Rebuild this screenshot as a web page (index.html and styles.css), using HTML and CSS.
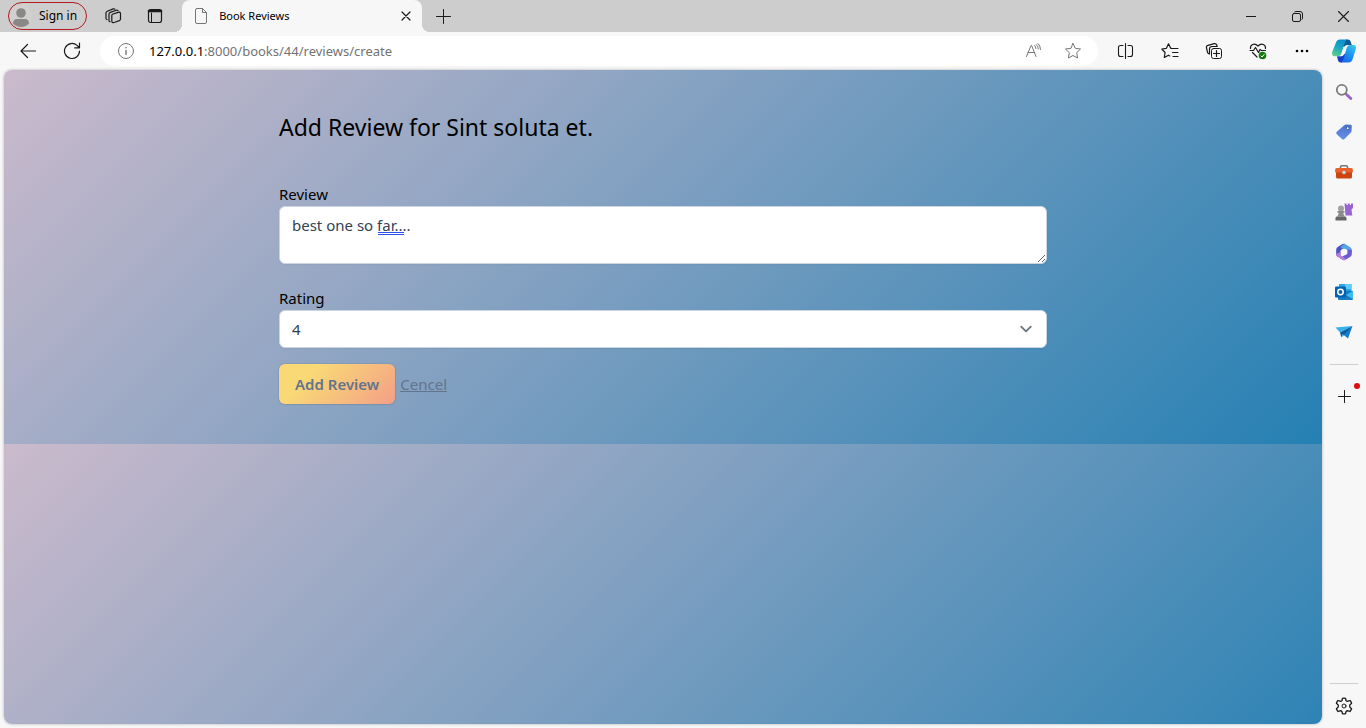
FILE: index.html
```
<!DOCTYPE html>
<html lang="en">
<head>
<meta charset="utf-8">
<title>Book Reviews</title>
<link rel="stylesheet" href="styles.css">
</head>
<body>
<div class="window">
  <header class="tabstrip">
    <button class="profile" type="button">
      <svg width="22" height="22" viewBox="0 0 22 22"><circle cx="11" cy="11" r="11" fill="#d2d0ce"/><circle cx="11" cy="8" r="4.8" fill="#8a8886"/><path d="M3 18.500c0-3 1.500-4.500 4-4.500h8c2.500 0 4 1.500 4 4.500a11 11 0 0 1-16 0z" fill="#8a8886"/></svg>
      <span>Sign in</span>
    </button>
    <button class="strip-button" type="button" aria-label="Workspaces">
      <svg class="line" width="18" height="18" viewBox="0 0 18 18"><path d="M8.500 7.300l5.500-1.900q2.500-.8 2.500 1.500v5q0 1.200-1.200 1.700l-4.500 1.700q-3 1-3-1.300V8.500q0-.9.700-1.200zM5 14V7.300q0-1.300 1.300-1.900l6-2.200q1-.3 1.600.3M5 13.700q.2 1 1 1.100M2 11.700V6Q2 4.700 3.200 4.200l6-2.300q1-.3 1.700.3M2 11.500q.2 1 1 1.200" stroke-width="1.200"/></svg>
    </button>
    <button class="strip-button" type="button" aria-label="Tab actions">
      <svg class="line" width="16" height="16" viewBox="0 0 16 16"><rect x="1.500" y="1.500" width="13" height="13" rx="2.200" stroke-width="1.200"/><path d="M2 3h12" stroke-width="2.600"/><path d="M4.500 5v9.500"/></svg>
    </button>
    <div class="tab">
      <svg class="line muted" width="14" height="18" viewBox="0 0 14 18"><path d="M2.500 1.500h6l4 4v9.500q0 1.500-1.500 1.500H3Q1.500 16.500 1.500 15V3q0-1.500 1.500-1.500M8.500 1.500v4h4"/></svg>
      <span class="tab-title">Book Reviews</span>
      <button type="button" class="tab-close" aria-label="Close tab"><svg class="line" width="10" height="10" viewBox="0 0 10 10"><path d="M1 1l8 8M9 1L1 9" stroke-width="1.200"/></svg></button>
    </div>
    <button class="strip-button" type="button" aria-label="New tab"><svg class="line" width="15" height="15" viewBox="0 0 15 15"><path d="M7.500.5v14M.5 7.500h14"/></svg></button>
    <div class="window-controls">
      <button type="button" aria-label="Minimize"><svg class="line" width="10" height="10" viewBox="0 0 10 10"><path d="M0 5.500h10"/></svg></button>
      <button type="button" aria-label="Restore"><svg class="line" width="11" height="11" viewBox="0 0 11 11"><rect x=".5" y="2.500" width="8" height="8" rx="1.500"/><path d="M2.700.8Q3 .5 4 .5h4q2.500 0 2.500 2.500v4q0 1-.4 1.400"/></svg></button>
      <button type="button" aria-label="Close"><svg class="line" width="11" height="11" viewBox="0 0 11 11"><path d="M.5.5l10 10M10.500.5l-10 10" stroke-width="1.100"/></svg></button>
    </div>
  </header>

  <nav class="toolbar" aria-label="Browser toolbar">
    <button type="button" aria-label="Back"><svg class="line" width="18" height="18" viewBox="0 0 18 18"><path d="M16.500 9H2M8.500 2.500L2 9l6.500 6.500" stroke-width="1.200"/></svg></button>
    <button type="button" aria-label="Refresh"><svg class="line" width="18" height="18" viewBox="0 0 18 18"><path d="M16.500 9a7.500 7.500 0 1 1-2.500-5.600L16.200 5.500M16.500 1v4.800h-4.800" stroke-width="1.200"/></svg></button>
    <div class="address">
      <button type="button" aria-label="Site information"><svg class="line muted" width="18" height="18" viewBox="0 0 18 18"><circle cx="9" cy="9" r="7.500"/><path d="M9 8.500v4M9 5.500v.3" stroke-width="1.400"/></svg></button>
      <div class="url"><span class="host">127.0.0.1</span>:8000/books/44/reviews/create</div>
      <button type="button" aria-label="Read aloud"><svg class="line muted" width="18" height="18" viewBox="0 0 18 18"><path d="M2.500 14.500L7 3.500h.6l4.400 11M4 10.500h6.500M10.500 3.500q1.400 1.200 1.400 3M12.300 2.500q2 1.600 2 4.500M14 1.500q2.500 2 2.500 6"/></svg></button>
      <button type="button" aria-label="Add to favorites"><svg class="line muted" width="18" height="18" viewBox="0 0 18 18"><path d="M9 1.500l2.300 4.800 5.200.7-3.800 3.700.9 5.300L9 13.500 4.400 16l.9-5.300L1.500 7l5.200-.7z"/></svg></button>
    </div>
    <button type="button" aria-label="Split screen"><svg class="line" width="18" height="18" viewBox="0 0 18 18"><path d="M6 3.500H3.500q-2 0-2 2v7q0 2 2 2H6M11 3.500h2.500q2 0 2 2v7q0 2-2 2H11M8.500 1.500v15" stroke-width="1.100"/></svg></button>
    <button type="button" aria-label="Favorites"><svg class="line" width="18" height="18" viewBox="0 0 18 18"><path d="M10.500 6.300H9.700L7.500 1.800 5.400 6.300.8 7l3.300 3.500-.8 5 4.200-2.300 1.200.7M11 6.500h6M11.500 10.500H17M12 14.500h5" stroke-width="1.200"/></svg></button>
    <button type="button" aria-label="Collections"><svg class="line" width="18" height="18" viewBox="0 0 18 18"><rect x="6.500" y="6.500" width="10" height="10" rx="2"/><path d="M11.500 8.500v6M8.500 11.500h6M4.500 12Q3 11.700 2.600 10.500L1.500 6Q1 4 3 3.300l6.300-1.700Q11 1.300 11.600 2.700L12.200 4.500H7Q4.500 4.500 4.500 7z" stroke-width="1.200"/></svg></button>
    <button type="button" aria-label="Browser essentials"><svg class="line" width="18" height="18" viewBox="0 0 18 18"><path d="M1.500 6.500C1 2.500 5.500.5 9 4c3.500-3.500 8-1.500 7.500 2.500M3.500 10.500L8 15M1 8.500h3.500l2-3 3 5 1.500-3 1.500 1h4" stroke-width="1.200"/><circle cx="13.500" cy="13.500" r="3.800" fill="#107c10" stroke="none"/><path d="M12 14l1 1 2.200-2.500" stroke="#fff"/></svg></button>
    <button type="button" aria-label="Settings and more"><svg width="16" height="4" viewBox="0 0 16 4"><circle cx="3" cy="2" r="1.300"/><circle cx="8" cy="2" r="1.300"/><circle cx="13" cy="2" r="1.300"/></svg></button>
    <button type="button" class="copilot" aria-label="Copilot">
      <svg width="26" height="24" viewBox="0 0 26 24">
        <defs><linearGradient id="cpa" x1=".2" y1="1" x2=".6" y2="0"><stop offset="0" stop-color="#5fd08b"/><stop offset=".5" stop-color="#1fa9bd"/><stop offset="1" stop-color="#0c8ed2"/></linearGradient><linearGradient id="cpb" x1=".2" y1="1" x2=".8" y2="0"><stop offset="0" stop-color="#1a66e8"/><stop offset=".5" stop-color="#1c93f2"/><stop offset="1" stop-color="#35c4e6"/></linearGradient></defs>
        <path d="M15 .5h2q2 0 2.700 2.200L20.700 6H17q-2.500 0-3.500 2.500L11.500 7z" fill="#0b5c97"/>
        <path d="M11 23.500H9.500q-2 0-2.500-2l-1-4.300h3.700q2.600 0 3.500-2.700l2 3z" fill="#1740c8"/>
        <path d="M5 3.500Q6 .5 9 .5h7.300q-1.800.5-2.500 2.700L10.500 14q-1 3.200-3.700 3.200H4Q.2 17.200 1.200 13z" fill="url(#cpa)"/>
        <path d="M21.500 20.500q-1 3-4 3H9.700q2-.4 2.700-2.700L15.500 9.500q1-3.500 3.800-3.500h2.900q3.600 0 2.600 4z" fill="url(#cpb)"/>
        <path d="M12.600 8.500Q13.500 6 16.700 6h.7q-2 1.300-2.700 3.600L13 15.300q-.6 2-3.500 1.900 1.300-1 1.800-3.200z" fill="#f7f7f7"/>
      </svg>
    </button>
  </nav>

  <div class="workspace">
    <main class="page">
      <form class="review-form">
        <h1>Add Review for Sint soluta et.</h1>
        <label for="review">Review</label>
        <div class="review-field">
          <textarea id="review" name="review" spellcheck="false">best one so far....</textarea>
          <span class="grammar-mark"></span>
        </div>
        <label for="rating">Rating</label>
        <select id="rating" name="rating"><option>1</option><option>2</option><option>3</option><option selected>4</option><option>5</option></select>
        <div class="actions">
          <button type="submit" class="submit">Add Review</button>
          <a href="#">Cencel</a>
        </div>
      </form>
    </main>

    <aside class="sidebar">
      <button type="button" aria-label="Search"><svg width="18" height="18" viewBox="0 0 18 18" fill="none"><circle cx="6.800" cy="6.800" r="5" stroke="#7c7c7c" stroke-width="1.800"/><path d="M10.500 10.500l1.500 1.500" stroke="#777" stroke-width="2"/><path d="M12 12l3.800 3.500" stroke="#9b62d0" stroke-width="3" stroke-linecap="round"/></svg></button>
      <button type="button" aria-label="Shopping"><svg width="18" height="18" viewBox="0 0 18 18"><defs><linearGradient id="tag" x2="0" y2="1"><stop stop-color="#4d72cf"/><stop offset="1" stop-color="#658fe8"/></linearGradient></defs><path d="M9 2.500Q10 1.500 11.500 1.500l4 .2q1.300 0 1.300 1.300l-.2 4.500q0 1.200-1 2.200L9.500 16q-1.300 1.200-2.500 0L1.800 11.200q-1.200-1.200 0-2.400z" fill="url(#tag)"/><circle cx="12.700" cy="5.200" r="1.500" fill="#fff" stroke="#33529f"/></svg></button>
      <button type="button" aria-label="Tools"><svg width="18" height="18" viewBox="0 0 18 18"><path d="M5.500 6V4q0-1.300 1.300-1.300h4.400q1.300 0 1.300 1.300v2" fill="none" stroke="#777" stroke-width="1.600"/><rect x=".2" y="5" width="17.600" height="5" rx="1.500" fill="#e8602c"/><path d="M1 9.500h16V14q0 1.500-1.500 1.500h-13Q1 15.500 1 14z" fill="#cc430f"/><circle cx="9" cy="9.500" r="1.800" fill="#bfd9e6"/></svg></button>
      <button type="button" aria-label="Games"><svg width="18" height="18" viewBox="0 0 18 18"><path d="M9.500.5h2V2h1.300V.5h2V2H16V.5h2v4.500L16.500 6.500l.8 6H10.500z" fill="#9b64d5"/><circle cx="6" cy="5.500" r="3" fill="#a0a0a0"/><path d="M2.500 8h7v1.700H8.300q0 2 1.700 3.800H2q1.700-1.800 1.700-3.800H2.500z" fill="#8b8b8b"/><path d="M.5 15.200q0-1.700 1.500-1.700h8q1.500 0 1.500 1.700v2.300H.5z" fill="#666"/></svg></button>
      <button type="button" aria-label="Microsoft 365"><svg width="18" height="18" viewBox="0 0 18 18"><path d="M7.500 1L3 3.700Q1.200 4.800 1.200 6.800V11q0 2 1.600 3l2.700-1.700V7.500L12 3.800 9.500.8Q8.500.4 7.500 1z" fill="#4a52c4"/><path d="M9.500.8L15 3.900q1.800 1 1.800 3V9.500L12.500 11V7L7 5.500 5.500 4z" fill="#55a5e8"/><path d="M16.800 7v4q0 2-1.700 3l-4.600 2.800q-1.500.9-3 0L5 15.200l4-2.800 3.500-1.900V6.300z" fill="#6b5bd0"/><path d="M2.500 13.700L7.500 16.800q1.500.9 3 0l1-.6-6-4V9L1.200 11q0 2 1.300 2.700z" fill="#b47be0"/><circle cx="9" cy="9" r="3.200" fill="#f7f7f7"/></svg></button>
      <button type="button" aria-label="Outlook"><svg width="18" height="18" viewBox="0 0 18 18"><path d="M4 1h12.500v9H4z" fill="#28a8ea"/><path d="M10 1h6.500v5H10z" fill="#60cbf5"/><path d="M3 7l15 1v8q0 1-1 1H4q-1 0-1-1z" fill="#147ec5"/><path d="M18 8v8L11 12z" fill="#3ebcf0"/><rect x="0" y="3.500" width="11" height="11" rx="1" fill="#0563b4"/><circle cx="5.500" cy="9" r="2.700" fill="none" stroke="#fff" stroke-width="1.500"/></svg></button>
      <button type="button" aria-label="Drop"><svg width="18" height="18" viewBox="0 0 18 18"><path d="M.5 4.500l17-1.500L5 9.500z" fill="#35b2ee"/><path d="M17.500 3L13 15.500 7.500 11z" fill="#167dcc"/><path d="M17.500 3L5 9.500l1.300 4.800z" fill="#0b5a9e"/><path d="M6.300 14.300L7.500 11l2 1.500z" fill="#56bce9"/></svg></button>
      <hr>
      <button type="button" class="customize" aria-label="Customize sidebar"><svg class="line" width="13" height="13" viewBox="0 0 13 13"><path d="M6.500.5v12M.5 6.500h12"/></svg><span class="dot"></span></button>
      <hr class="bottom-rule">
      <button type="button" aria-label="Settings"><svg class="line" width="18" height="18" viewBox="0 0 18 18"><circle cx="9" cy="9" r="2"/><path d="M7.400 1.400Q9 1 10.600 1.400L11 3.600q.7.800 2 .6l2-.7q1.100 1.100 1.600 2.700L15 7.700q-.8 1.300 0 2.600l1.600 1.500q-.5 1.600-1.600 2.700l-2-.7q-1.300-.2-2 .8l-.4 2q-1.600.4-3.200 0L7 14.600q-.7-1-2-.8l-2 .7q-1.100-1.100-1.600-2.700L3 10.300q.8-1.300 0-2.600L1.400 6.200Q1.900 4.600 3 3.500l2 .7q1.300.2 2-.6z" stroke-width="1.300"/></svg></button>
    </aside>
  </div>
</div>
</body>
</html>
```
FILE: styles.css
```
* { box-sizing: border-box; }
body {
  margin: 0;
  font-family: "Noto Sans", "Open Sans", sans-serif;
  color: #000;
}
button {
  font: inherit;
  color: inherit;
  border: 0;
  padding: 0;
  background: none;
}
svg { display: block; }
.line { fill: none; stroke: #1a1a1a; stroke-linecap: round; stroke-linejoin: round; }
.muted { stroke: #767676; }

.window {
  display: flex;
  flex-direction: column;
  height: 100vh;
  background: #f7f7f7;
}

.tabstrip {
  display: flex;
  flex: none;
  height: 32px;
  padding-left: 8px;
  background: #cdcdcd;
}
.profile {
  display: flex;
  align-items: center;
  gap: 7px;
  height: 28px;
  margin: 2px 5px 0 0;
  padding: 0 9px 0 1px;
  border: 1px solid #b3191f;
  border-radius: 14px;
  font-size: 12px;
  line-height: 16px;
}
.strip-button { display: grid; place-items: center; width: 42px; }
.tab {
  position: relative;
  display: flex;
  align-items: center;
  width: 240px;
  margin-left: 6px;
  padding: 0 10px 0 12px;
  border-radius: 8px 8px 0 0;
  background: #f7f7f7;
  font-size: 12px;
}
.tab::before, .tab::after {
  content: "";
  position: absolute;
  bottom: 0;
  width: 8px;
  height: 8px;
}
.tab::before { right: 100%; background: radial-gradient(circle at 0 0, #cdcdcd 8px, #f7f7f7 8px); }
.tab::after { left: 100%; background: radial-gradient(circle at 100% 0, #cdcdcd 8px, #f7f7f7 8px); }
.tab-title { flex: 1; margin-left: 11px; font-size: 11px; line-height: 16px; }
.tab-close { padding: 1px; }
.window-controls { display: flex; margin-left: auto; }
.window-controls button { display: grid; place-items: center; width: 46px; }

.toolbar {
  display: flex;
  flex: none;
  height: 38px;
  padding: 0 2px 0 6px;
}
.toolbar button { display: grid; place-items: center; width: 44px; }
.toolbar .copilot { width: 40px; }
.address {
  display: flex;
  align-items: center;
  flex: 1;
  height: 30px;
  margin: 4px 6px;
  padding: 0 5px 0 6px;
  border-radius: 15px;
  background: #fff;
}
.toolbar .address button { width: 40px; }
.url { flex: 1; margin-left: 3px; font-size: 13px; color: #737373; }
.host { color: #000; }

.workspace { display: flex; flex: 1; min-height: 0; }
.page {
  flex: 1;
  margin: 0 0 4px 4px;
  padding: 41px 16px;
  border-radius: 8px;
  background: linear-gradient(315deg, #2580b3 0%, #cbbacc 100%) 0 0 / 100% 374px;
  box-shadow: 0 0 3px rgba(0, 0, 0, 0.3);
  font-size: 15px;
  line-height: 24px;
}
.review-form {
  display: flex;
  flex-direction: column;
  max-width: 768px;
  margin: 0 auto;
}
h1 { margin: 0 0 39px; font-size: 23px; font-weight: 400; line-height: 32px; }
textarea, select {
  display: block;
  width: 100%;
  padding: 6px 12px;
  border: 1px solid #cbd5e1;
  border-radius: 6px;
  background-color: #fff;
  box-shadow: 0 1px 2px rgba(0, 0, 0, 0.05);
  color: #334155;
  font: inherit;
}
textarea { height: 58px; resize: vertical; }
.review-field { position: relative; margin-bottom: 22px; }
.grammar-mark {
  position: absolute;
  top: 26px;
  left: 99px;
  width: 26px;
  height: 3px;
  border: solid #2b50ed;
  border-width: 1px 0;
}
select {
  height: 38px;
  appearance: none;
  background-image: url("data:image/svg+xml,%3Csvg xmlns='http://www.w3.org/2000/svg' fill='none' viewBox='0 0 20 20'%3E%3Cpath stroke='%236b7280' stroke-linecap='round' stroke-linejoin='round' stroke-width='1.5' d='M6 8l4 4 4-4'/%3E%3C/svg%3E");
  background-position: right 8px center;
  background-repeat: no-repeat;
  background-size: 24px 24px;
}
.actions { display: flex; align-items: center; gap: 5px; margin-top: 16px; color: #64748b; }
.submit {
  height: 40px;
  padding: 0 16px;
  border-radius: 6px;
  background: linear-gradient(315deg, #f39f86 0%, #f9d976 74%);
  box-shadow: 0 0 0 1px rgba(51, 65, 85, 0.1), 0 1px 2px rgba(0, 0, 0, 0.05);
  font-weight: 600;
}
.actions a { color: inherit; }

.sidebar {
  display: flex;
  flex-direction: column;
  flex: none;
  width: 44px;
  padding: 2px 0;
}
.sidebar button {
  display: grid;
  place-items: center;
  flex: none;
  height: 40px;
}
.sidebar hr {
  width: 28px;
  margin: 12px auto 11px;
  border: 0;
  border-top: 1px solid #cfcfcf;
}
.sidebar .bottom-rule { margin: auto auto 2px; }
.sidebar .customize { position: relative; }
.dot {
  position: absolute;
  top: 7px;
  right: 6px;
  width: 6px;
  height: 6px;
  border-radius: 50%;
  background: #e00b0b;
}
```
